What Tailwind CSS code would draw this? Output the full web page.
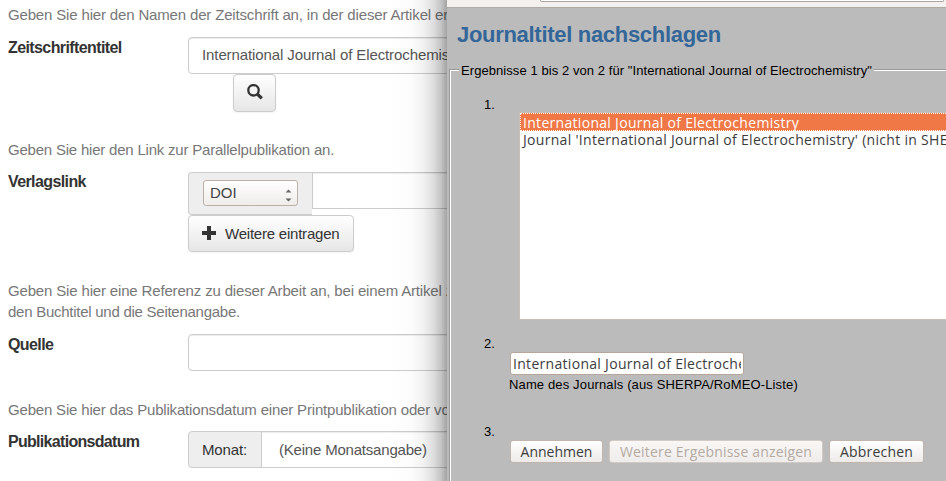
<!DOCTYPE html>
<html lang="de">
<head>
<meta charset="utf-8">
<title>Journaltitel nachschlagen</title>
<script src="https://cdn.jsdelivr.net/npm/@tailwindcss/browser@4"></script>
</head>
<body class="relative h-[481px] w-[946px] overflow-hidden bg-white font-['Liberation_Sans',Arial,sans-serif] text-[15px] leading-[21px] text-[#333]">
<main class="flex w-[946px] flex-col pt-1 pl-2 whitespace-nowrap">
  <section class="h-[135px]">
    <p class="tracking-[-0.16px] text-[#777]">Geben Sie hier den Namen der Zeitschrift an, in der dieser Artikel erschienen</p>
    <div class="mt-3 flex">
      <label class="w-[180px] text-[16px] font-bold tracking-[-0.6px]">Zeitschriftentitel</label>
      <div>
        <div class="flex h-[37px] w-[500px] items-center rounded border border-[#ccc] pb-[2px] pl-[13px] tracking-[-0.1px] text-[#555] shadow-[inset_0_1px_1px_rgba(0,0,0,0.075)]">International Journal of Electrochemistry</div>
        <button class="ml-[45px] flex h-[38px] w-[43px] items-center justify-center rounded border border-[#ccc] bg-linear-to-b from-white to-[#e6e6e6] pb-[2px] shadow-[0_1px_2px_rgba(0,0,0,0.05)]">
          <svg width="16" height="16" viewBox="0 0 16 16" fill="none" stroke="#333"><circle cx="6.5" cy="6.3" r="5.2" stroke-width="2.3"/><path d="M10.2 10L14.8 14.3" stroke-width="3.2"/></svg>
        </button>
      </div>
    </div>
  </section>
  <section class="h-[142px]">
    <p class="tracking-[-0.21px] text-[#777]">Geben Sie hier den Link zur Parallelpublikation an.</p>
    <div class="mt-3 flex">
      <label class="-mt-px w-[180px] text-[16px] font-bold tracking-[-0.6px]">Verlagslink</label>
      <div>
        <div class="flex items-start">
          <div class="h-[43px] w-[124px] rounded-l border border-r-0 border-[#ccc] bg-[#eee] pt-[7px] pl-[14px]">
            <div class="flex h-[26px] w-[95px] items-center justify-between rounded-[3px] border border-[#bcb0a8] bg-linear-to-b from-white to-[#efedeb] pr-[5px] pb-[2px] pl-[6px] text-[#444]">DOI
              <svg class="mt-[6px]" width="7" height="13" viewBox="0 0 7 13" fill="#666"><path d="M.5 3.5L3.5 .5L6.5 3.5ZM.5 9.5H6.5L3.5 12.5Z"/></svg>
            </div>
          </div>
          <div class="h-[37px] w-[400px] border border-[#ccc] shadow-[inset_0_1px_1px_rgba(0,0,0,0.075)]"></div>
        </div>
        <button class="flex h-[37px] w-[166px] items-center rounded border border-[#ccc] bg-linear-to-b from-white to-[#e6e6e6] pb-px pl-[13px] tracking-[-0.22px] shadow-[0_1px_2px_rgba(0,0,0,0.05)]">
          <svg width="14" height="14" viewBox="0 0 14 14" fill="#333"><path d="M5 0H9V5H14V9H9V14H5V9H0V5H5Z"/></svg>
          <span class="ml-[9px]">Weitere eintragen</span>
        </button>
      </div>
    </div>
  </section>
  <section class="h-[118px]">
    <p class="-mt-px tracking-[-0.16px] text-[#777]">Geben Sie hier eine Referenz zu dieser Arbeit an, bei einem Artikel zum<br><span class="tracking-[-0.26px]">den Buchtitel und die Seitenangabe.</span></p>
    <div class="mt-[12px] flex">
      <label class="w-[180px] text-[16px] font-bold tracking-[-0.6px]">Quelle</label>
      <div class="h-[37px] w-[500px] rounded border border-[#ccc] shadow-[inset_0_1px_1px_rgba(0,0,0,0.075)]"></div>
    </div>
  </section>
  <section>
    <p class="tracking-[-0.18px] text-[#777]">Geben Sie hier das Publikationsdatum einer Printpublikation oder von</p>
    <div class="mt-[11px] flex">
      <label class="w-[180px] text-[16px] font-bold tracking-[-0.7px]">Publikationsdatum</label>
      <div class="flex h-[37px] w-[74px] items-center rounded-l border border-[#ccc] bg-[#eee] pl-[13px] tracking-[-0.15px]">Monat:</div>
      <div class="-ml-px flex h-[37px] w-[400px] items-center border border-[#ccc] pl-[17px] tracking-[-0.2px] text-[#555] shadow-[inset_0_1px_1px_rgba(0,0,0,0.075)]">(Keine Monatsangabe)</div>
    </div>
  </section>
</main>

<!-- Soft shadow of the lookup window -->
<div class="absolute top-0 left-[387px] h-[481px] w-[60px] bg-[linear-gradient(to_right,rgba(0,0,0,0)_0%,rgba(0,0,0,0.01)_40%,rgba(0,0,0,0.05)_60%,rgba(0,0,0,0.13)_77%,rgba(0,0,0,0.23)_90%,rgba(0,0,0,0.36)_100%)]"></div>

<!-- Lookup window -->
<aside class="absolute top-0 left-[447px] h-[481px] w-[499px] overflow-hidden bg-[#bbb] text-[13px] leading-[15px] whitespace-nowrap text-black">
  <header class="h-[8px] border-b border-[#b2a9a2] bg-[#f2f1f0] pl-[93px]">
    <div class="h-[2px] w-[404px] rounded-b-[3px] border border-t-0 border-[#aaa59f] bg-white"></div>
  </header>
  <h1 class="mt-[14px] ml-[10px] text-[22px] leading-[26px] font-bold tracking-[-0.3px] text-[#369]">Journaltitel nachschlagen</h1>
  <div class="mt-[13px] flex h-[18px] items-center pl-[2px]">
    <div class="mt-[8px] h-[10px] w-[10px] self-start border-t border-l border-[#999]"><div class="h-full border-t border-l border-white"></div></div>
    <span class="ml-[2px] w-[413px] tracking-[0.07px]">Ergebnisse 1 bis 2 von 2 für "International Journal of Electrochemistry"</span>
    <div class="mt-[8px] h-[2px] flex-1 self-start border-t border-[#999] bg-white"></div>
  </div>
  <div class="ml-[2px] h-[402px] border-l border-[#999]">
    <ol class="h-full border-l border-white pt-[18px] pl-[33px]">
      <li class="h-[239px]">
        <div>1.</div>
        <div class="ml-[35px] h-[208px] w-[500px] border border-[#c8beb6] bg-white font-['Open_Sans','Noto_Sans',sans-serif] text-[14px] leading-[17px] tracking-[0.3px] text-[#3c3c3c]">
          <div class="h-[18px] border border-dotted border-white bg-[#f07746] pl-[2px] leading-[17px] text-white">International Journal of Electrochemistry</div>
          <div class="pl-[3px]">Journal 'International Journal of Electrochemistry' (nicht in SHERPA</div>
        </div>
      </li>
      <li class="h-[88px]">
        <div>2.</div>
        <div class="mt-[1px] ml-[26px] h-[23px] w-[234px] rounded-[3px] border border-[#b8a69b] bg-white pr-[2px] pl-[2px] font-['Open_Sans','Noto_Sans',sans-serif] text-[14px] leading-[21px] tracking-[0.3px] text-[#3c3c3c]"><div class="overflow-hidden">International Journal of Electrochemistry</div></div>
        <div class="mt-[2px] ml-[25px] tracking-[0.14px]">Name des Journals (aus SHERPA/RoMEO-Liste)</div>
      </li>
      <li>
        <div>3.</div>
        <div class="mt-[1px] ml-[26px] flex gap-[6px] font-['Open_Sans','Noto_Sans',sans-serif] text-[14px] text-[#3c3c3c]">
          <button class="h-[23px] w-[93px] rounded-[3px] border border-[#c2b5ab] bg-linear-to-b from-white to-[#edebe9]">Annehmen</button>
          <button class="h-[23px] w-[214px] rounded-[3px] border border-[#d2cac4] bg-linear-to-b from-[#f8f7f6] to-[#efedeb] tracking-[0.18px] text-[#b5aaa2]">Weitere Ergebnisse anzeigen</button>
          <button class="h-[23px] w-[95px] rounded-[3px] border border-[#c2b5ab] bg-linear-to-b from-white to-[#edebe9] tracking-[0.2px]">Abbrechen</button>
        </div>
      </li>
    </ol>
  </div>
</aside>
</body>
</html>
